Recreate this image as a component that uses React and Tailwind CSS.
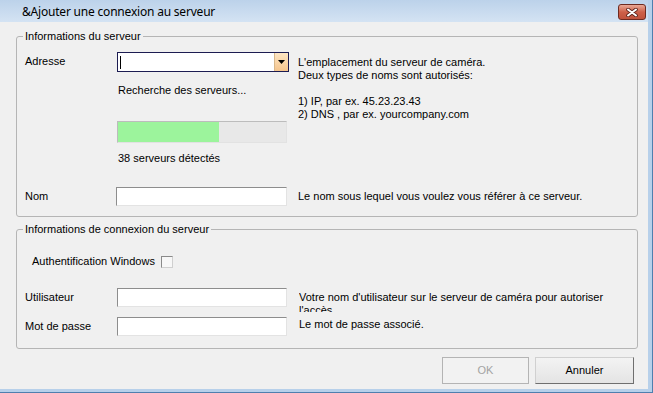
const inputCls =
  'h-[19px] bg-white border border-t-[#8d8d8d] border-l-[#8d8d8d] border-r-[#e3e3e3] border-b-[#e3e3e3]';

function CloseButton() {
  return (
    <div className="w-[28px] h-[16px] rounded-[3px] border border-[#6e2a20] bg-gradient-to-b from-[#e9a896] via-[#cd6049] to-[#c0523c] flex items-center justify-center">
      <svg width="12" height="9" viewBox="0 0 12 9">
        <path d="M2 1.5 L10 7.5 M10 1.5 L2 7.5" stroke="#5a2018" strokeWidth="3.6" strokeLinecap="round" />
        <path d="M2 1.5 L10 7.5 M10 1.5 L2 7.5" stroke="#ffffff" strokeWidth="2" strokeLinecap="round" />
      </svg>
    </div>
  );
}

function ComboBox() {
  return (
    <div className="w-[172px] h-[20px] flex bg-white border border-[#1c1c52]">
      <div className="flex-1 flex items-center pl-[2px]">
        <div className="w-[1px] h-[13px] bg-black" />
      </div>
      <div className="w-[14px] h-full flex items-center justify-center border-l border-[#d8b78a] bg-gradient-to-b from-[#fde6c4] to-[#f4c48c]">
        <svg width="7" height="4" viewBox="0 0 7 4">
          <path d="M0 0 H7 L3.5 4 Z" fill="#000" />
        </svg>
      </div>
    </div>
  );
}

export default function App() {
  return (
    <div className="w-[653px] h-[393px] overflow-hidden bg-[#f0f0f0] text-[11px] leading-[13px] text-black font-['Liberation_Sans',Arial,sans-serif] border-r border-b border-[#4f7fae]">
      <div className="h-full flex flex-col border-r-[4px] border-b-[3px] border-[#b7d0ea]">
        {/* title bar */}
        <div className="h-[22px] shrink-0 flex items-center justify-between pl-[22px] pr-[2px] bg-gradient-to-b from-[#bcd2ea] to-[#d4e3f3]">
          <span className="text-[12px] font-['Noto_Sans',sans-serif] tracking-[-0.2px]">&amp;Ajouter une connexion au serveur</span>
          <div className="self-start mt-[4px]">
            <CloseButton />
          </div>
        </div>

        <div className="flex-1 flex flex-col pl-[16px] pr-[10px] pt-[8px]">
          {/* Informations du serveur */}
          <fieldset className="border border-[#b5b5b5] rounded-[3px] px-[8px] pb-[10px]">
            <legend className="px-[2px] -ml-[2px]">Informations du serveur</legend>
            <div className="grid grid-cols-[92px_181px_1fr] gap-y-[22px] mt-[9px]">
              <div className="leading-[18px]">Adresse</div>
              <div className="flex flex-col">
                <ComboBox />
                <div className="mt-[12px] pl-[1px]">Recherche des serveurs...</div>
                <div className="mt-[24px] w-[170px] h-[22px] flex border border-t-[#bcbcbc] border-l-[#bcbcbc] border-r-[#e2e2e2] border-b-[#e2e2e2] bg-[#e8e8e8]">
                  <div className="w-[101px] h-full bg-[#9cf49c]" />
                </div>
                <div className="mt-[9px] pl-[1px]">38 serveurs détectés</div>
              </div>
              <div className="pt-[4px]">
                L'emplacement du serveur de caméra.
                <br />
                Deux types de noms sont autorisés:
                <br />
                <br />
                1) IP, par ex. 45.23.23.43
                <br />
                2) DNS , par ex. yourcompany.com
              </div>

              <div className="leading-[19px]">Nom</div>
              <div className={`${inputCls} w-[171px] -ml-[1px]`} />
              <div className="leading-[19px]">Le nom sous lequel vous voulez vous référer à ce serveur.</div>
            </div>
          </fieldset>

          {/* Informations de connexion du serveur */}
          <fieldset className="mt-[6px] border border-[#b5b5b5] rounded-[3px] px-[8px] pb-[12px]">
            <legend className="px-[2px] -ml-[2px]">Informations de connexion du serveur</legend>
            <div className="mt-[19px] pl-[7px] flex items-center gap-[6px]">
              <span>Authentification Windows</span>
              <div className="w-[12px] h-[12px] bg-[#f7f7f7] border border-t-[#8a8a8a] border-l-[#8a8a8a] border-r-[#cfcfcf] border-b-[#cfcfcf]" />
            </div>
            <div className="grid grid-cols-[92px_182px_1fr] gap-y-[10px] mt-[20px]">
              <div className="leading-[19px]">Utilisateur</div>
              <div className={`${inputCls} w-[170px]`} />
              <div className="h-[24px] -mb-[5px] overflow-hidden pt-[3px] whitespace-nowrap">
                Votre nom d'utilisateur sur le serveur de caméra pour autoriser
                <br />
                l'accès
              </div>

              <div className="leading-[19px]">Mot de passe</div>
              <div className={`${inputCls} w-[170px]`} />
              <div className="pt-[1px]">Le mot de passe associé.</div>
            </div>
          </fieldset>

          {/* buttons */}
          <div className="mt-[8px] pr-[4px] flex justify-end gap-[6px]">
            <button className="w-[87px] h-[27px] border border-[#b4b4b4] bg-[#f2f2f2] text-[#a3a3a3]">OK</button>
            <button className="w-[99px] h-[27px] border border-t-[#d0d0d0] border-l-[#d0d0d0] border-r-[#6f6f6f] border-b-[#6f6f6f] bg-gradient-to-b from-[#f3f3f3] to-[#e4e4e4]">
              Annuler
            </button>
          </div>
        </div>
      </div>
    </div>
  );
}
